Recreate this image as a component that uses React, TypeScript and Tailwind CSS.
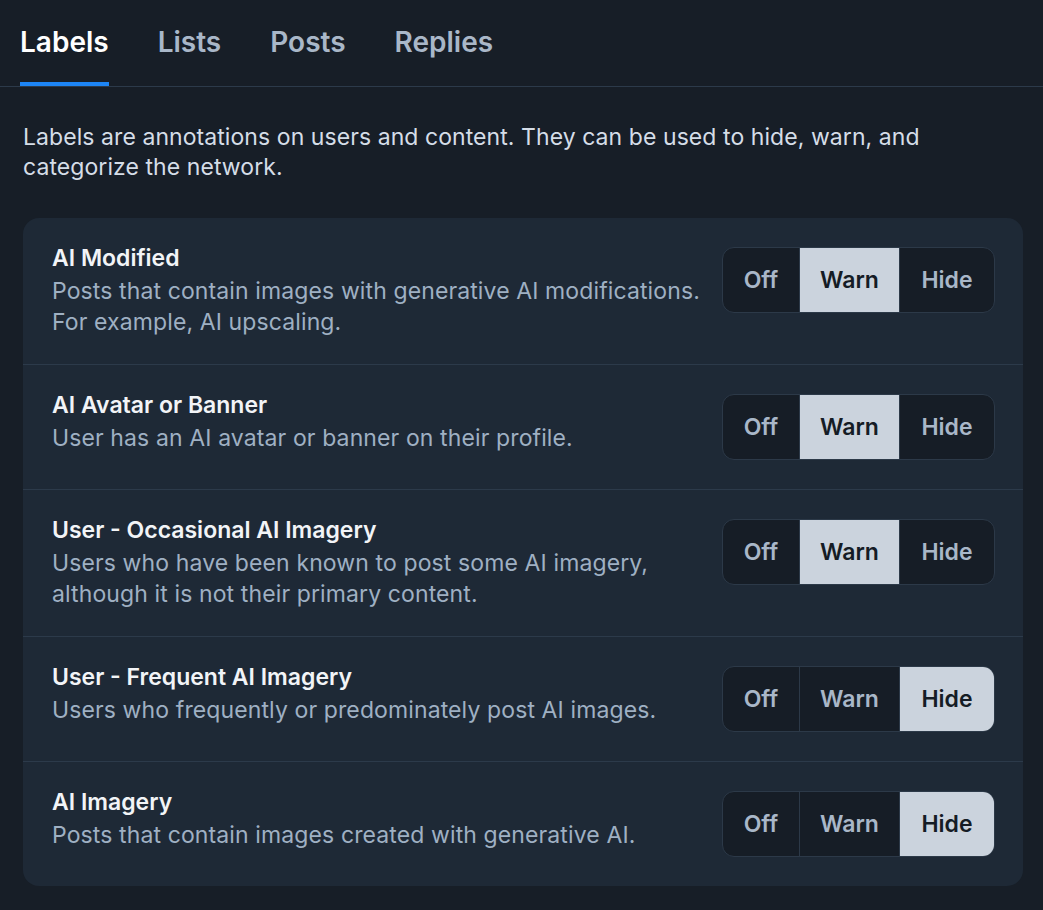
import { useState } from 'react'

type Level = 'off' | 'warn' | 'hide'

const labels: { title: string; desc: string; level: Level }[] = [
  {
    title: 'AI Modified',
    desc: 'Posts that contain images with generative AI modifications. For example, AI upscaling.',
    level: 'warn',
  },
  {
    title: 'AI Avatar or Banner',
    desc: 'User has an AI avatar or banner on their profile.',
    level: 'warn',
  },
  {
    title: 'User - Occasional AI Imagery',
    desc: 'Users who have been known to post some AI imagery, although it is not their primary content.',
    level: 'warn',
  },
  {
    title: 'User - Frequent AI Imagery',
    desc: 'Users who frequently or predominately post AI images.',
    level: 'hide',
  },
  {
    title: 'AI Imagery',
    desc: 'Posts that contain images created with generative AI.',
    level: 'hide',
  },
]

const tabs = ['Labels', 'Lists', 'Posts', 'Replies']

const options: { key: Level; label: string; width: string }[] = [
  { key: 'off', label: 'Off', width: 'w-[76px]' },
  { key: 'warn', label: 'Warn', width: 'w-[100px]' },
  { key: 'hide', label: 'Hide', width: 'w-[95px]' },
]

function Segmented({ initial }: { initial: Level }) {
  const [value, setValue] = useState<Level>(initial)

  return (
    <div className="mt-px mb-[2px] flex h-[66px] shrink-0 overflow-hidden rounded-[12px] border border-[#2c3948] bg-[#161d26]">
      {options.map((o, i) => (
        <button
          key={o.key}
          onClick={() => setValue(o.key)}
          className={
            'flex items-center justify-center text-[23px] font-semibold ' +
            o.width +
            ' ' +
            (i > 0 ? 'border-l border-[#2c3948] ' : '') +
            (value === o.key ? 'bg-[#cbd3dd] text-[#151c25]' : 'text-[#a9b7c8]')
          }
        >
          {o.label}
        </button>
      ))}
    </div>
  )
}

export default function App() {
  const [active, setActive] = useState('Labels')

  return (
    <div
      className="min-h-screen bg-[#171e27] pb-6 antialiased"
      style={{ fontFamily: 'Inter, "Noto Sans", sans-serif' }}
    >
      <nav className="flex gap-[49px] border-b border-[#2c3a4a] px-5">
        {tabs.map((t) => (
          <button
            key={t}
            onClick={() => setActive(t)}
            className={
              'relative h-[86px] pb-[2px] text-[28px] font-semibold ' +
              (active === t ? 'text-white' : 'text-[#a9b7c8]')
            }
          >
            {t}
            {active === t && (
              <span className="absolute inset-x-0 bottom-0 h-[4px] bg-[#1d85f5]" />
            )}
          </button>
        ))}
      </nav>

      <div className="pl-[23px] pr-5">
        <p className="mt-[35px] text-[23px] leading-[30px] tracking-[0.003em] text-[#d5dde7]">
          Labels are annotations on users and content. They can be used to hide, warn, and
          categorize the network.
        </p>

        <div className="mt-[36px] overflow-hidden rounded-[16px] bg-[#1e2936]">
          {labels.map((l, i) => (
            <div
              key={l.title}
              className={
                'flex items-start justify-between gap-4 pl-[29px] pr-[28px] pt-[28px] pb-[27px] ' +
                (i > 0 ? 'border-t border-[#2c3a4a]' : '')
              }
            >
              <div className="flex flex-1 flex-col gap-[6px]">
                <div className="text-[23px] font-semibold leading-6 text-[#f2f4f7]">
                  {l.title}
                </div>
                <div className="text-[23px] leading-[30.5px] tracking-[0.005em] text-[#9fb0c3]">
                  {l.desc}
                </div>
              </div>
              <Segmented initial={l.level} />
            </div>
          ))}
        </div>
      </div>
    </div>
  )
}
